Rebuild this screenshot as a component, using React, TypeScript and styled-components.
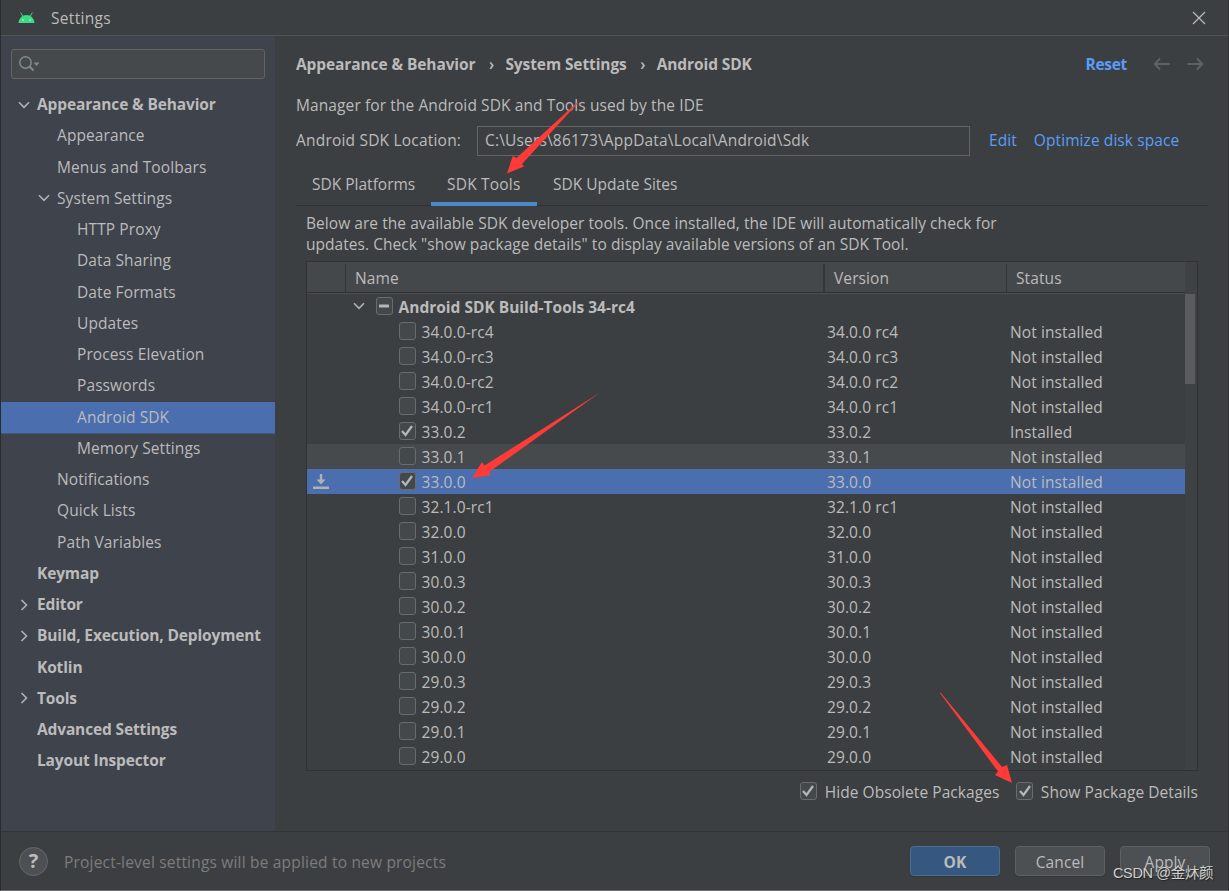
import React from 'react';
import styled, { createGlobalStyle, css } from 'styled-components';

const GlobalStyle = createGlobalStyle`
  * { box-sizing: border-box; }
  html, body { margin: 0; padding: 0; background: #3c3f41; overflow: hidden; }
  body {
    font-family: 'Open Sans', 'Noto Sans', 'Noto Sans CJK SC', sans-serif;
    font-size: 15.5px;
    letter-spacing: 0.1px;
    color: #bbbbbb;
    white-space: nowrap;
  }
  svg { display: block; flex: none; }
`;

const Window = styled.div`
  position: relative;
  width: 1229px;
  height: 891px;
  display: flex;
  flex-direction: column;
  background: #3c3f41;
  border-left: 1px solid #2b2c2d;
  border-right: 1px solid #2f3132;
  border-bottom: 1px solid #6b6d6f;
  overflow: hidden;
`;

const TitleBar = styled.header`
  height: 36px;
  flex: none;
  display: flex;
  align-items: center;
  padding: 0 22px 0 17px;
  border-bottom: 1px solid #515456;
`;

const WindowTitle = styled.span`
  margin-left: 16px;
  flex: 1;
  line-height: 22px;
  letter-spacing: 0.3px;
`;

const Body = styled.div`
  flex: 1;
  min-height: 0;
  display: flex;
`;

const Sidebar = styled.nav`
  width: 274px;
  flex: none;
  background: #3f434c;
  padding-top: 13px;
`;

const SearchField = styled.div`
  width: 254px;
  height: 30px;
  margin: 0 0 10.6px 10px;
  padding-left: 7px;
  display: flex;
  align-items: center;
  background: #45494a;
  border: 1px solid #646464;
  border-radius: 3px;
`;

const TreeRow = styled.div<{ $level: number; $bold?: boolean; $selected?: boolean }>`
  height: 31.25px;
  display: flex;
  align-items: center;
  padding-bottom: 2px;
  padding-left: ${(p) => 16 + p.$level * 20}px;
  font-weight: ${(p) => (p.$bold ? 700 : 400)};
  letter-spacing: ${(p) => (p.$bold ? '-0.14px' : '0.1px')};
  background: ${(p) => (p.$selected ? '#4b6eaf' : 'transparent')};
  box-shadow: ${(p) => (p.$selected ? '0 0.5px 0 #4b6eaf' : 'none')};
`;

const TreeChevron = styled.span`
  width: 20px;
  margin-top: 1px;
  flex: none;
  display: flex;
`;

const Main = styled.main`
  flex: 1;
  min-width: 0;
  padding: 0 21px 0 21px;
  display: flex;
  flex-direction: column;
`;

const Breadcrumbs = styled.div`
  height: 28px;
  margin-top: 14px;
  display: flex;
  align-items: center;
  font-weight: 700;
  letter-spacing: -0.1px;
`;

const Crumb = styled.span<{ $grow?: boolean }>`
  flex: ${(p) => (p.$grow ? '1' : 'none')};
`;

const CrumbSeparator = styled.span`
  width: 30px;
  padding-left: 2px;
  display: flex;
  justify-content: center;
  font-weight: 600;
`;

const Link = styled.a<{ $bold?: boolean; $gap?: number }>`
  color: #589df6;
  margin-left: ${(p) => p.$gap ?? 0}px;
  font-weight: ${(p) => (p.$bold ? 700 : 400)};
  letter-spacing: ${(p) => (p.$bold ? '-0.3px' : '0.08px')};
`;

const HistoryArrows = styled.div`
  display: flex;
  gap: 17px;
  margin: 0 3px 0 26px;
`;

const Intro = styled.p`
  margin: 15px 0 0;
  height: 24px;
  line-height: 24px;
`;

const LocationRow = styled.div`
  height: 30px;
  margin-top: 9px;
  display: flex;
  align-items: center;
  line-height: 28px;
`;

const LocationLabel = styled.label`
  width: 181px;
  padding-bottom: 2px;
  letter-spacing: 0.2px;
`;

const LocationField = styled.div`
  width: 493px;
  height: 30px;
  margin-right: 19px;
  padding-left: 7px;
  border: 1px solid #646464;
  line-height: 26px;
  letter-spacing: 0.17px;
`;

const LocationLinks = styled.div`
  display: flex;
  padding-bottom: 2px;
`;

const Tabs = styled.div`
  height: 42px;
  margin-top: 8px;
  display: flex;
  border-bottom: 1px solid #323232;
  width: 912px;
`;

const Tab = styled.div<{ $width: number; $active?: boolean }>`
  width: ${(p) => p.$width}px;
  height: 42px;
  padding: 0 0 2px 16px;
  line-height: 41px;
  letter-spacing: 0;
  ${(p) =>
    p.$active &&
    css`
      box-shadow: inset 0 -4px 0 #4a88c7;
      letter-spacing: 0.2px;
    `}
`;

const Description = styled.p`
  margin: 0;
  height: 55px;
  padding: 7px 0 0 10px;
  line-height: 21px;
  letter-spacing: 0.05px;
`;

const Table = styled.section`
  width: 892px;
  height: 510px;
  margin-left: 10px;
  border: 1px solid #323232;
  display: flex;
`;

const TableContent = styled.div`
  width: 878px;
`;

const columns = css`
  display: grid;
  grid-template-columns: 39px 479px 182px 1fr;
`;

const TableHeader = styled.div`
  ${columns}
  height: 32px;
  background: #45484a;
  border-bottom: 1px solid #4b4e50;
  box-shadow: inset 0 -1px 0 #323232;
`;

const HeaderCell = styled.div<{ $last?: boolean; $thick?: boolean }>`
  height: 28px;
  margin-top: 2px;
  padding-left: 9px;
  line-height: 29px;
  border-right: ${(p) => (p.$last ? '0' : p.$thick ? '2px' : '1px')} solid #35383a;
`;

const TableRow = styled.div<{ $tone?: 'hover' | 'selected' }>`
  ${columns}
  height: 25px;
  align-items: center;
  background: ${(p) => (p.$tone === 'selected' ? '#4b6eaf' : p.$tone === 'hover' ? '#464a4c' : 'transparent')};
`;

const ActionCell = styled.div`
  padding-left: 6px;
`;

const NameCell = styled.div<{ $group?: boolean }>`
  height: 25px;
  display: flex;
  align-items: center;
  padding-left: ${(p) => (p.$group ? 6 : 52.5)}px;
  font-weight: ${(p) => (p.$group ? 700 : 400)};
  letter-spacing: ${(p) => (p.$group ? '0' : '0.1px')};
`;

const GroupChevron = styled.span`
  width: 23.5px;
  margin-top: -2px;
`;

const Cell = styled.div<{ $indent: number }>`
  padding: 2px 0 0 ${(p) => p.$indent}px;
  line-height: 23px;
`;

const PackageName = styled.span`
  margin-left: 5.5px;
  line-height: 24px;
  padding-top: 1px;
`;

const Box = styled.span`
  width: 17.5px;
  height: 18px;
  flex: none;
  margin-top: -1px;
  display: flex;
  align-items: center;
  justify-content: center;
  background: #43494a;
  border: 1px solid #6b6b6b;
  border-radius: 3px;
`;

const ScrollTrack = styled.div`
  width: 12px;
  padding-top: 32px;
  background: #3f4244;
`;

const ScrollThumb = styled.div`
  width: 10px;
  height: 90px;
  background: #595b5d;
`;

const Options = styled.div`
  width: 902px;
  height: 41px;
  display: flex;
  align-items: center;
  justify-content: flex-end;
  gap: 16.5px;
  letter-spacing: 0.06px;
`;

const Option = styled.label`
  display: flex;
  align-items: center;
  gap: 7.5px;
`;

const Footer = styled.footer`
  height: 59px;
  flex: none;
  display: flex;
  align-items: center;
  padding: 0 18px;
  border-top: 1px solid #313435;
`;

const HelpButton = styled.button`
  width: 29px;
  height: 29px;
  padding: 0;
  border: 1px solid #64686a;
  border-radius: 50%;
  background: #4c5052;
  color: #bbbbbb;
  font: 700 20px/26px 'Open Sans', sans-serif;
`;

const Hint = styled.span`
  flex: 1;
  margin-left: 16px;
  padding-top: 1px;
  letter-spacing: 0.19px;
  color: #7c7c7c;
`;

const Button = styled.button<{ $primary?: boolean }>`
  width: 90px;
  height: 30px;
  margin-left: 15px;
  padding: 2px 0 0;
  font: ${(p) => (p.$primary ? 700 : 400)} 15.5px/26px 'Open Sans', sans-serif;
  letter-spacing: 0.1px;
  color: #bbbbbb;
  border: 1px solid ${(p) => (p.$primary ? '#4c708c' : '#5e6060')};
  border-radius: 4px;
  background: ${(p) => (p.$primary ? '#365880' : '#4c5052')};
  box-shadow: 0 1px 1px #35383a;
`;

const Annotations = styled.svg`
  position: absolute;
  left: -1px;
  top: 0;
  pointer-events: none;
`;

const Watermark = styled.div`
  position: absolute;
  left: 1112px;
  top: 863px;
  font: 14.5px/20px 'Liberation Sans', 'Noto Sans CJK SC', sans-serif;
  letter-spacing: -0.35px;
  color: #d0d0d0;
  text-shadow: 1px 1px 1px #222;
`;

const ChevronDown = () => (
  <svg width="14" height="12" viewBox="0 0 14 12" fill="none" stroke="#b0b2b4" strokeWidth="1.6">
    <path d="M2 3.2 7 8.4 12 3.2" />
  </svg>
);

const ChevronRight = () => (
  <svg width="14" height="12" viewBox="0 0 14 12" fill="none" stroke="#b0b2b4" strokeWidth="1.6">
    <path d="M4.5 1 9.5 6 4.5 11" />
  </svg>
);

const AndroidHead = () => (
  <svg width="17" height="12" viewBox="0 0 17 12">
    <path d="M4.6 4 2.9 1M12.4 4 14.1 1" stroke="#3ddc84" strokeWidth="1" strokeLinecap="round" />
    <path d="M.5 11C1 6.5 4 3 8.5 3S16 6.5 16.5 11Z" fill="#3ddc84" />
    <circle cx="4.9" cy="8" r=".8" fill="#d5f6e4" />
    <circle cx="12.1" cy="8" r=".8" fill="#d5f6e4" />
  </svg>
);

type BoxState = 'on' | 'off' | 'mixed';

const Checkbox = ({ state }: { state: BoxState }) => (
  <Box>
    {state === 'on' && (
      <svg width="16" height="16" viewBox="0 0 16 16" fill="none" stroke="#b4b6b7" strokeWidth="2.3">
        <path d="M3 8 6.5 12 13 3" />
      </svg>
    )}
    {state === 'mixed' && (
      <svg width="16" height="16" viewBox="0 0 16 16">
        <rect x="3" y="6.5" width="10" height="3" rx=".5" fill="#b4b6b7" />
      </svg>
    )}
  </Box>
);

type Node = { label: string; level: number; bold?: boolean; open?: boolean; selected?: boolean };

const tree: Node[] = [
  { label: 'Appearance & Behavior', level: 0, bold: true, open: true },
  { label: 'Appearance', level: 1 },
  { label: 'Menus and Toolbars', level: 1 },
  { label: 'System Settings', level: 1, open: true },
  { label: 'HTTP Proxy', level: 2 },
  { label: 'Data Sharing', level: 2 },
  { label: 'Date Formats', level: 2 },
  { label: 'Updates', level: 2 },
  { label: 'Process Elevation', level: 2 },
  { label: 'Passwords', level: 2 },
  { label: 'Android SDK', level: 2, selected: true },
  { label: 'Memory Settings', level: 2 },
  { label: 'Notifications', level: 1 },
  { label: 'Quick Lists', level: 1 },
  { label: 'Path Variables', level: 1 },
  { label: 'Keymap', level: 0, bold: true },
  { label: 'Editor', level: 0, bold: true, open: false },
  { label: 'Build, Execution, Deployment', level: 0, bold: true, open: false },
  { label: 'Kotlin', level: 0, bold: true },
  { label: 'Tools', level: 0, bold: true, open: false },
  { label: 'Advanced Settings', level: 0, bold: true },
  { label: 'Layout Inspector', level: 0, bold: true },
];

const packages = [
  '34.0.0-rc4', '34.0.0-rc3', '34.0.0-rc2', '34.0.0-rc1', '33.0.2', '33.0.1', '33.0.0', '32.1.0-rc1', '32.0.0',
  '31.0.0', '30.0.3', '30.0.2', '30.0.1', '30.0.0', '29.0.3', '29.0.2', '29.0.1', '29.0.0',
].map((name) => ({
  name,
  version: name.replace('-', ' '),
  installed: name === '33.0.2',
  selected: name === '33.0.0',
  hovered: name === '33.0.1',
}));

export default function App() {
  return (
    <>
      <GlobalStyle />
      <Window>
        <TitleBar>
          <AndroidHead />
          <WindowTitle>Settings</WindowTitle>
          <svg width="14" height="14" viewBox="0 0 14 14" stroke="#bbbbbb" strokeWidth="1.2">
            <path d="M1 1 13 13M13 1 1 13" />
          </svg>
        </TitleBar>
        <Body>
          <Sidebar>
            <SearchField>
              <svg width="21" height="16" viewBox="0 0 21 16" fill="none" stroke="#7f8b91" strokeWidth="1.5">
                <circle cx="6.5" cy="6.5" r="5.7" />
                <path d="M10.5 10.5 14.5 14.5" strokeWidth="2" />
                <path d="M14.5 6.5h6L17.5 10Z" fill="#7f8b91" stroke="none" />
              </svg>
            </SearchField>
            {tree.map((node) => (
              <TreeRow key={node.label} $level={node.level} $bold={node.bold} $selected={node.selected}>
                <TreeChevron>
                  {node.open === true && <ChevronDown />}
                  {node.open === false && <ChevronRight />}
                </TreeChevron>
                {node.label}
              </TreeRow>
            ))}
          </Sidebar>
          <Main>
            <Breadcrumbs>
              <Crumb>Appearance &amp; Behavior</Crumb>
              <CrumbSeparator>›</CrumbSeparator>
              <Crumb>System Settings</Crumb>
              <CrumbSeparator>›</CrumbSeparator>
              <Crumb $grow>Android SDK</Crumb>
              <Link $bold>Reset</Link>
              <HistoryArrows>
                <svg width="17" height="14" viewBox="0 0 17 14" fill="none" stroke="#5f6162" strokeWidth="2">
                  <path d="M7 1.5 1.8 7 7 12.5M1.8 7H16.5" />
                </svg>
                <svg width="17" height="14" viewBox="0 0 17 14" fill="none" stroke="#5f6162" strokeWidth="2">
                  <path d="M10 1.5 15.2 7 10 12.5M15.2 7H.5" />
                </svg>
              </HistoryArrows>
            </Breadcrumbs>
            <Intro>Manager for the Android SDK and Tools used by the IDE</Intro>
            <LocationRow>
              <LocationLabel>Android SDK Location:</LocationLabel>
              <LocationField>C:\Users\86173\AppData\Local\Android\Sdk</LocationField>
              <LocationLinks>
                <Link>Edit</Link>
                <Link $gap={17}>Optimize disk space</Link>
              </LocationLinks>
            </LocationRow>
            <Tabs>
              <Tab $width={135}>SDK Platforms</Tab>
              <Tab $width={106} $active>SDK Tools</Tab>
              <Tab $width={160}>SDK Update Sites</Tab>
            </Tabs>
            <Description>
              Below are the available SDK developer tools. Once installed, the IDE will automatically check for
              <br />
              updates. Check "show package details" to display available versions of an SDK Tool.
            </Description>
            <Table>
              <TableContent>
                <TableHeader>
                  <HeaderCell />
                  <HeaderCell $thick>Name</HeaderCell>
                  <HeaderCell>Version</HeaderCell>
                  <HeaderCell $last>Status</HeaderCell>
                </TableHeader>
                <TableRow>
                  <ActionCell />
                  <NameCell $group>
                    <GroupChevron><ChevronDown /></GroupChevron>
                    <Checkbox state="mixed" />
                    <PackageName>Android SDK Build-Tools 34-rc4</PackageName>
                  </NameCell>
                </TableRow>
                {packages.map((p) => (
                  <TableRow key={p.name} $tone={p.selected ? 'selected' : p.hovered ? 'hover' : undefined}>
                    <ActionCell>
                      {p.selected && (
                        <svg width="16" height="16" viewBox="0 0 16 16" fill="#afb1b3">
                          <path d="M6.8 0h2.4v5.5h3.300L8 10.500 3.500 5.500H6.800Z" />
                          <path d="M0 12.500h16v2.500H0Z" />
                        </svg>
                      )}
                    </ActionCell>
                    <NameCell>
                      <Checkbox state={p.installed || p.selected ? 'on' : 'off'} />
                      <PackageName>{p.name}</PackageName>
                    </NameCell>
                    <Cell $indent={2}>{p.version}</Cell>
                    <Cell $indent={3}>{p.installed ? 'Installed' : 'Not installed'}</Cell>
                  </TableRow>
                ))}
              </TableContent>
              <ScrollTrack>
                <ScrollThumb />
              </ScrollTrack>
            </Table>
            <Options>
              <Option><Checkbox state="on" />Hide Obsolete Packages</Option>
              <Option><Checkbox state="on" />Show Package Details</Option>
            </Options>
          </Main>
        </Body>
        <Footer>
          <HelpButton>?</HelpButton>
          <Hint>Project-level settings will be applied to new projects</Hint>
          <Button $primary>OK</Button>
          <Button>Cancel</Button>
          <Button>Apply</Button>
        </Footer>
        <Annotations width="1229" height="891" viewBox="0 0 1229 891" fill="#ff3b38">
          <path d="M578 103 522 164 524 166.5 507 173.5 512.7 156 516.5 158 576.500 103Z" />
          <path d="M600 392.5 489 472 491 475 472 478 482 462 484.5 465.5Z" />
          <path d="M939.5 692.5 941 693 1002 767 1007 765 1012 783 995 775 998 771.5Z" />
        </Annotations>
        <Watermark>CSDN @金炑颜</Watermark>
      </Window>
    </>
  );
}
